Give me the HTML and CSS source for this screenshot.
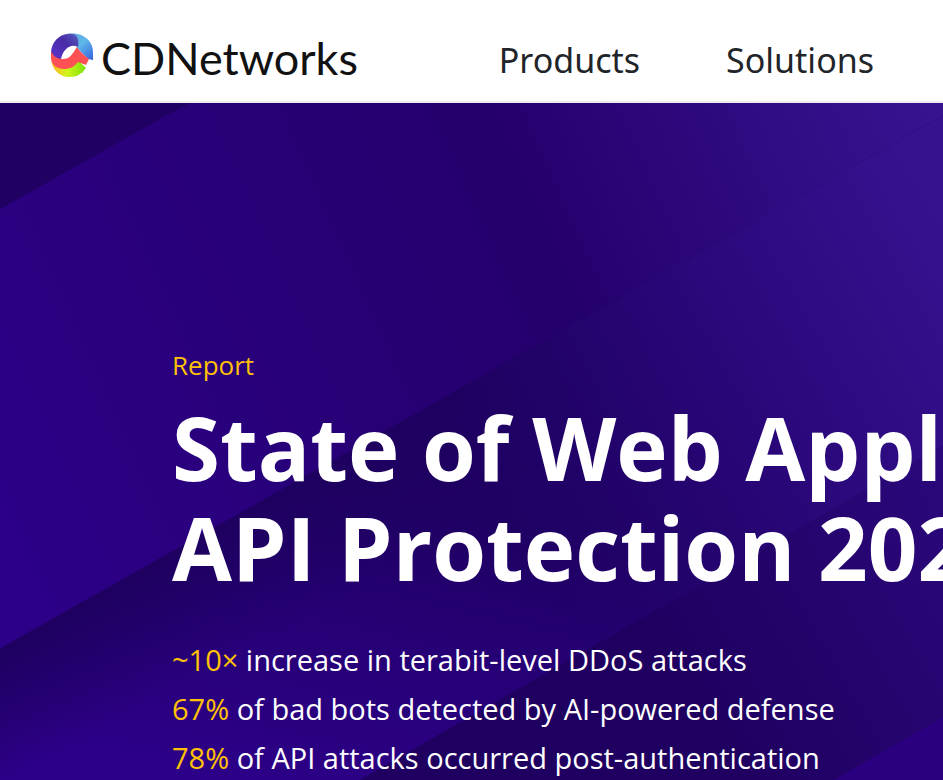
FILE: index.html
```
<!DOCTYPE html>
<html lang="en">
<head>
    <meta charset="UTF-8">
    <meta name="viewport" content="width=device-width, initial-scale=1.0">
    <title>State of Web Application and API Protection | CDNetworks</title>
    <link rel="stylesheet" href="styles.css">
</head>
<body>
    <header class="site-header">
        <a class="logo" href="#">
            <svg class="logo-mark" viewBox="0 0 44 44" aria-hidden="true">
                <defs>
                    <linearGradient id="markBlue" x1="0" y1="0" x2="1" y2="1">
                        <stop offset="0" stop-color="#5f9cd8"/>
                        <stop offset="0.5" stop-color="#5fb8ea"/>
                        <stop offset="1" stop-color="#3560dc"/>
                    </linearGradient>
                    <linearGradient id="markPurple" x1="0" y1="1" x2="1" y2="0">
                        <stop offset="0" stop-color="#5b35d0"/>
                        <stop offset="0.6" stop-color="#4a2ba6"/>
                        <stop offset="1" stop-color="#5560c0"/>
                    </linearGradient>
                    <linearGradient id="markGreen" x1="0" y1="0" x2="1" y2="0">
                        <stop offset="0" stop-color="#ffb02a"/>
                        <stop offset="0.45" stop-color="#d2f51a"/>
                        <stop offset="1" stop-color="#7be00a"/>
                    </linearGradient>
                </defs>
                <path fill="url(#markGreen)" d="M1 24C1 36 9 44 19 44c5 0 9-1 12-4l1 0 4-5-8-8-14 5z"/>
                <path fill="url(#markBlue)" d="M14 2C28-3 43 5 43 19l0 8-5-1L27 15l-3-9z"/>
                <path fill="url(#markPurple)" d="M1 20C1 10 9 1 18 1c7-1 12 3 10 13-7-4-15 2-17 12L4 28z"/>
                <path fill="#ff5055" d="M1 18c2 5 6 8 12 8 5 0 8-3 10-6l4-6c3 5 7 8 12 12l-3 6-8-3c-4 5-8 7-14 7C7 36 1 32 1 24z"/>
            </svg>
            <span class="logo-text">CDNetworks</span>
        </a>
        <nav class="main-nav">
            <a href="#">Products</a>
            <a href="#">Solutions</a>
        </nav>
    </header>
    <main class="hero">
        <svg class="hero-bg" viewBox="0 0 943 677" preserveAspectRatio="xMinYMin slice" aria-hidden="true">
            <defs>
                <linearGradient id="bandTop" gradientUnits="userSpaceOnUse" x1="0" y1="460" x2="943" y2="40">
                    <stop offset="0" stop-color="#2d0088"/>
                    <stop offset="0.6" stop-color="#24006c"/>
                    <stop offset="1" stop-color="#381391"/>
                </linearGradient>
                <linearGradient id="bandMiddle" gradientUnits="userSpaceOnUse" x1="300" y1="374" x2="225" y2="690">
                    <stop offset="0" stop-color="#1f0063"/>
                    <stop offset="0.4" stop-color="#260075"/>
                    <stop offset="1" stop-color="#2d0089"/>
                </linearGradient>
                <linearGradient id="edgeShade" gradientUnits="userSpaceOnUse" x1="250" y1="402" x2="310" y2="509">
                    <stop offset="0" stop-color="#1e0060"/>
                    <stop offset="1" stop-color="#1e0060" stop-opacity="0"/>
                </linearGradient>
                <linearGradient id="glow" gradientUnits="userSpaceOnUse" x1="480" y1="375" x2="943" y2="110">
                    <stop offset="0" stop-color="#240570" stop-opacity="0"/>
                    <stop offset="0.5" stop-color="#2a0779"/>
                    <stop offset="1" stop-color="#361290"/>
                </linearGradient>
                <linearGradient id="bandBottom" gradientUnits="userSpaceOnUse" x1="640" y1="512" x2="943" y2="340">
                    <stop offset="0" stop-color="#1f0060"/>
                    <stop offset="1" stop-color="#2b087c"/>
                </linearGradient>
            </defs>
            <rect width="943" height="677" fill="url(#bandTop)"/>
            <path fill="#210064" d="M0 0h190L165 13 0 106z"/>
            <path fill="url(#bandMiddle)" d="M0 544L943 11v666H0z"/>
            <path fill="url(#edgeShade)" d="M0 544L943 11v666H0z"/>
            <path fill="url(#glow)" d="M300 374L943 11v666H300z"/>
            <path fill="url(#bandBottom)" d="M355 677L943 340v337z"/>
            <path fill="#2a0080" d="M828 677l115-66v66z"/>
        </svg>
        <div class="hero-content">
            <p class="hero-label">Report</p>
            <h1>State of Web Application and<br>API Protection 2025</h1>
            <ul class="hero-stats">
                <li><span>~10×</span> increase in terabit-level DDoS attacks</li>
                <li><span>67%</span> of bad bots detected by AI-powered defense</li>
                <li><span>78%</span> of API attacks occurred post-authentication</li>
            </ul>
        </div>
    </main>
</body>
</html>
```
FILE: styles.css
```
* {
    box-sizing: border-box;
}

body {
    margin: 0;
    font-family: "Open Sans", "Noto Sans", sans-serif;
    background-color: #ffffff;
    overflow-x: hidden;
}

/* Header */
.site-header {
    display: flex;
    align-items: center;
    height: 103px;
    padding: 8px 50px 0;
    border-bottom: 2px solid #ececf2;
}

.logo {
    display: flex;
    align-items: center;
    gap: 7px;
    color: #111111;
    text-decoration: none;
}

.logo-mark {
    width: 44px;
    height: 44px;
}

.logo-text {
    padding-top: 6px;
    font-family: Lato, sans-serif;
    font-size: 45px;
    line-height: 56px;
}

.main-nav {
    display: flex;
    gap: 86px;
    margin-left: auto;
    padding: 10px 19px 0 0;
}

.main-nav a {
    color: #212529;
    font-family: "Noto Sans", "Open Sans", sans-serif;
    font-size: 34px;
    line-height: 48px;
    text-decoration: none;
}

/* Hero */
.hero {
    position: relative;
    overflow: hidden;
    min-height: calc(100vh - 103px);
    background-color: #24006c;
    color: #ffffff;
}

.hero-bg {
    position: absolute;
    top: 0;
    left: 0;
    width: 100%;
    height: 100%;
}

.hero-content {
    position: relative;
    padding: 244px 0 0 172px;
    white-space: nowrap;
}

.hero-label {
    margin: 0;
    color: #ffc107;
    font-size: 26px;
    line-height: 36px;
}

h1 {
    margin: 14px 0 38px;
    font-size: 87px;
    line-height: 100px;
    font-weight: 700;
}

.hero-stats {
    margin: 0;
    padding: 0;
    list-style: none;
    font-size: 29px;
    line-height: 49px;
}

.hero-stats span {
    color: #ffc107;
}
```
